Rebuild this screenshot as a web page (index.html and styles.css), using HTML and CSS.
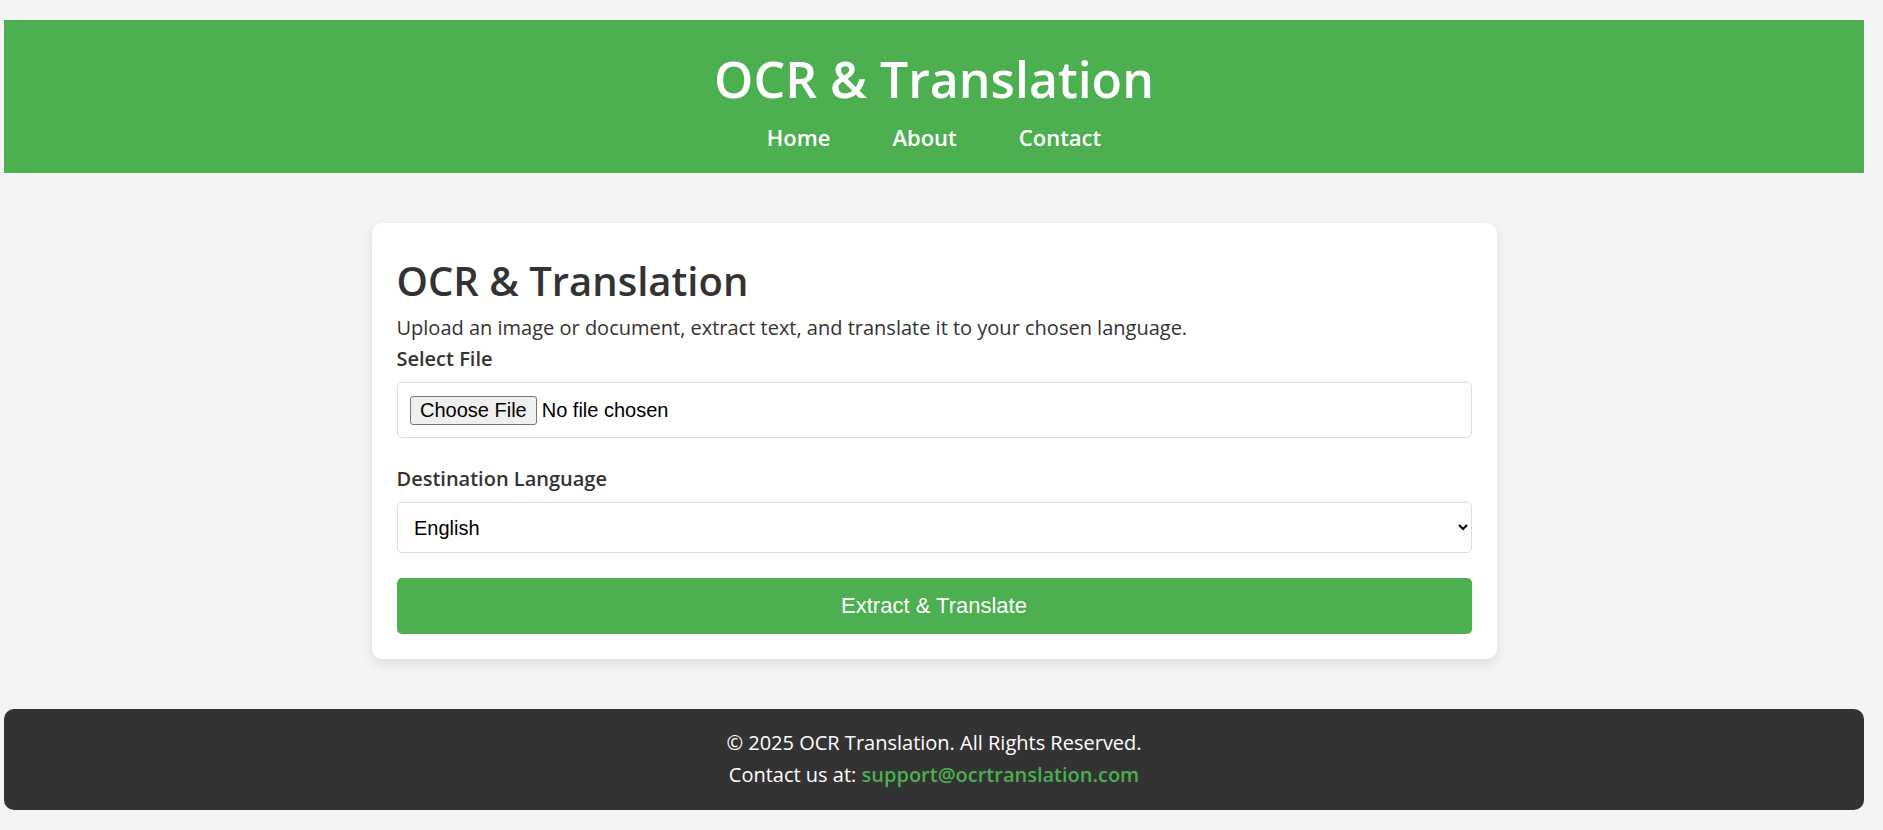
FILE: index.html
```html
<!DOCTYPE html>
<html lang="en">
<head>
<meta charset="utf-8">
<title>OCR &amp; Translation</title>
<link rel="stylesheet" href="styles.css">
</head>
<body>
  <header class="site-header">
    <h1 class="site-title">OCR &amp; Translation</h1>
    <nav class="site-nav">
      <a href="#">Home</a>
      <a href="#">About</a>
      <a href="#">Contact</a>
    </nav>
  </header>

  <main class="card">
    <h2 class="card-title">OCR &amp; Translation</h2>
    <p class="card-desc">Upload an image or document, extract text, and translate it to your chosen language.</p>
    <form class="form">
      <label class="field-label" for="file">Select File</label>
      <input class="file-input" type="file" id="file">
      <label class="field-label label-lang" for="lang">Destination Language</label>
      <select class="lang-select" id="lang">
        <option>English</option>
        <option>French</option>
        <option>Spanish</option>
      </select>
      <button class="submit-btn" type="button">Extract &amp; Translate</button>
    </form>
  </main>

  <footer class="site-footer">
    <p class="footer-line">© 2025 OCR Translation. All Rights Reserved.</p>
    <p class="footer-line">Contact us at: <a class="footer-link" href="#">support@ocrtranslation.com</a></p>
  </footer>
</body>
</html>
```

FILE: styles.css
```css
html, body {
  margin: 0;
}

body {
  background: #f4f4f4;
  font-family: "Open Sans", "Liberation Sans", sans-serif;
  color: #333;
  padding: 20px 19px 20px 4px;
}

.site-header {
  background: #4CAF50;
  color: #fff;
  text-align: center;
  padding: 25px 0 21px;
}

.site-title {
  margin: 0 0 9px;
  font-size: 50px;
  font-weight: 600;
  line-height: normal;
}

.site-nav {
  display: flex;
  justify-content: center;
  gap: 62px;
  font-size: 22px;
  line-height: normal;
}

.site-nav a {
  color: #fff;
  text-decoration: none;
  font-weight: 600;
}

.card {
  box-sizing: border-box;
  width: 1125px;
  margin: 50px auto 50px;
  background: #fff;
  border-radius: 10px;
  padding: 25px;
  box-shadow: 0 5px 12px rgba(0, 0, 0, 0.1);
}

.card-title {
  margin: 5px 0 6px;
  font-size: 40px;
  font-weight: 600;
  line-height: normal;
  color: #333;
}

.card-desc {
  margin: 0 0 4px;
  font-size: 20px;
  line-height: normal;
}

.form {
  display: flex;
  flex-direction: column;
}

.field-label {
  display: block;
  font-size: 20px;
  font-weight: 600;
  line-height: normal;
  margin-bottom: 10px;
}

.label-lang {
  margin-top: 27px;
}

.file-input {
  box-sizing: border-box;
  width: 100%;
  padding: 12.5px;
  border: 1px solid #ddd;
  border-radius: 5px;
  background: #fff;
  font-family: "Liberation Sans", Arial, sans-serif;
  font-size: 20px;
  color: #000;
}

.file-input::file-selector-button {
  font-family: "Liberation Sans", Arial, sans-serif;
  font-size: 20px;
  color: #000;
  background: #efefef;
  border: 1px solid #767676;
  border-radius: 3px;
  padding: 2px 9px;
  margin-right: 5px;
}

.lang-select {
  box-sizing: border-box;
  width: 100%;
  padding: 12.5px;
  border: 1px solid #ddd;
  border-radius: 5px;
  background: #fff;
  font-family: "Liberation Sans", Arial, sans-serif;
  font-size: 20px;
  color: #000;
}

.submit-btn {
  margin-top: 25px;
  width: 100%;
  padding: 16px;
  border: none;
  border-radius: 5px;
  background: #4CAF50;
  color: #fff;
  font-family: "Liberation Sans", Arial, sans-serif;
  font-size: 22px;
  line-height: 24px;
}

.site-footer {
  background: #333;
  color: #fff;
  text-align: center;
  border-radius: 10px;
  padding: 18px 0 19px;
}

.footer-line {
  margin: 0;
  font-size: 20px;
  line-height: 32px;
}

.footer-link {
  color: #4CAF50;
  font-weight: 600;
  text-decoration: none;
}
```
